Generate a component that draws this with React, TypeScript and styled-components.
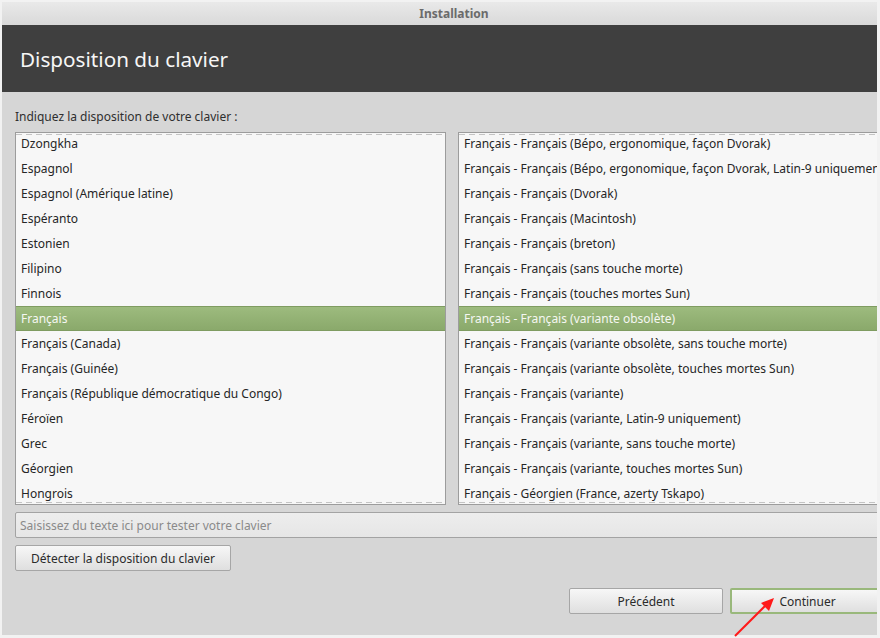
import React, { useState } from 'react';
import styled, { createGlobalStyle } from 'styled-components';

const GlobalStyle = createGlobalStyle`
  body {
    margin: 0;
    padding: 0;
    background: #f2f2f2;
    font-family: "Noto Sans", "Open Sans", sans-serif;
  }
`;

const Screen = styled.div`
  position: relative;
  width: 880px;
  height: 638px;
  overflow: hidden;
`;

// the visible part of the installer window; the window itself is wider
const Frame = styled.div`
  margin: 2px 0 0 2px;
  width: 875px;
  height: 633px;
  overflow: hidden;
`;

const Window = styled.div`
  width: 904px;
  height: 633px;
  display: flex;
  flex-direction: column;
  background: #d6d6d6;
`;

const TitleBar = styled.div`
  height: 23px;
  display: flex;
  align-items: center;
  justify-content: center;
  background: linear-gradient(#e9e9e9, #d9d9d9);
  color: #6b6b6b;
  font-size: 12px;
  font-weight: bold;
`;

const Header = styled.div`
  height: 67px;
  display: flex;
  align-items: center;
  padding: 0 18px;
  background: #3f3f3f;
  color: #f6f6f6;
  font-size: 20.7px;
`;

const Content = styled.div`
  flex: 1;
  display: flex;
  flex-direction: column;
  padding: 0 13px;
`;

const Prompt = styled.div`
  margin-top: 16px;
  height: 18px;
  line-height: 18px;
  font-size: 12px;
  color: #2f2f2f;
`;

const Lists = styled.div`
  margin-top: 6px;
  display: grid;
  grid-template-columns: 431px 431px;
  gap: 12px;
`;

const ListBox = styled.div`
  position: relative;
  height: 371px;
  border: 1px solid #9c9c9c;
  background: #f7f7f7;
  overflow: hidden;

  &::before,
  &::after {
    content: '';
    position: absolute;
    left: 0;
    right: 0;
    height: 1px;
    z-index: 1;
    background: repeating-linear-gradient(90deg, #c4c4c4 0 6px, transparent 6px 10px);
  }
  &::before { top: 1px; }
  &::after { bottom: 1px; }
`;

// rows are scrolled a couple of pixels past the top edge
const RowStack = styled.div`
  margin-top: -2px;
`;

const Row = styled.div<{ selected?: boolean }>`
  height: 25px;
  box-sizing: border-box;
  display: flex;
  align-items: center;
  padding-left: 5px;
  white-space: nowrap;
  font-size: 12px;
  color: ${p => (p.selected ? '#f5f7f2' : '#262626')};
  background: ${p => (p.selected ? 'linear-gradient(#9dbb7e, #8aa96b)' : 'transparent')};
  border-top: 1px solid ${p => (p.selected ? '#7f9c61' : 'transparent')};
  border-bottom: 1px solid ${p => (p.selected ? '#7f9c61' : 'transparent')};
`;

const TestInput = styled.input`
  margin-top: 7px;
  height: 26px;
  box-sizing: border-box;
  border: 1px solid #a3a3a3;
  border-radius: 2px;
  background: linear-gradient(#ededed, #e6e6e6);
  padding: 0 4px;
  font-family: inherit;
  font-size: 12px;
  color: #333;
  outline: none;

  &::placeholder {
    color: #8a8a8a;
  }
`;

const Button = styled.button<{ primary?: boolean; width: number }>`
  width: ${p => p.width}px;
  height: 26px;
  box-sizing: border-box;
  border: ${p => (p.primary ? '2px solid #99b87b' : '1px solid #a6a6a6')};
  border-radius: 2px;
  background: linear-gradient(#f7f7f7, #dfdfdf);
  font-family: inherit;
  font-size: 12px;
  color: #2b2b2b;
  padding: 0;
`;

const DetectRow = styled.div`
  margin-top: 7px;
  display: flex;
`;

const NavRow = styled.div`
  margin-top: 17px;
  display: flex;
  justify-content: flex-end;
  gap: 7px;
  padding-right: 8px;
`;

// red annotation arrow pointing at the Continuer button
const Annotation = styled.svg`
  position: absolute;
  left: 725px;
  top: 590px;
  pointer-events: none;
`;

const languages = [
  'Dzongkha',
  'Espagnol',
  'Espagnol (Amérique latine)',
  'Espéranto',
  'Estonien',
  'Filipino',
  'Finnois',
  'Français',
  'Français (Canada)',
  'Français (Guinée)',
  'Français (République démocratique du Congo)',
  'Féroïen',
  'Grec',
  'Géorgien',
  'Hongrois',
];

const variants = [
  'Français - Français (Bépo, ergonomique, façon Dvorak)',
  'Français - Français (Bépo, ergonomique, façon Dvorak, Latin-9 uniquement)',
  'Français - Français (Dvorak)',
  'Français - Français (Macintosh)',
  'Français - Français (breton)',
  'Français - Français (sans touche morte)',
  'Français - Français (touches mortes Sun)',
  'Français - Français (variante obsolète)',
  'Français - Français (variante obsolète, sans touche morte)',
  'Français - Français (variante obsolète, touches mortes Sun)',
  'Français - Français (variante)',
  'Français - Français (variante, Latin-9 uniquement)',
  'Français - Français (variante, sans touche morte)',
  'Français - Français (variante, touches mortes Sun)',
  'Français - Géorgien (France, azerty Tskapo)',
];

export default function App() {
  const [language, setLanguage] = useState('Français');
  const [variant, setVariant] = useState('Français - Français (variante obsolète)');

  return (
    <>
      <GlobalStyle />
      <Screen>
        <Frame>
          <Window>
            <TitleBar>Installation</TitleBar>
            <Header>Disposition du clavier</Header>
            <Content>
              <Prompt>Indiquez la disposition de votre clavier :</Prompt>
              <Lists>
                <ListBox>
                  <RowStack>
                    {languages.map(l => (
                      <Row key={l} selected={l === language} onClick={() => setLanguage(l)}>
                        {l}
                      </Row>
                    ))}
                  </RowStack>
                </ListBox>
                <ListBox>
                  <RowStack>
                    {variants.map(v => (
                      <Row key={v} selected={v === variant} onClick={() => setVariant(v)}>
                        {v}
                      </Row>
                    ))}
                  </RowStack>
                </ListBox>
              </Lists>
              <TestInput placeholder="Saisissez du texte ici pour tester votre clavier" />
              <DetectRow>
                <Button width={216}>Détecter la disposition du clavier</Button>
              </DetectRow>
              <NavRow>
                <Button width={154}>Précédent</Button>
                <Button width={155} primary>Continuer</Button>
              </NavRow>
            </Content>
          </Window>
        </Frame>
        <Annotation width="60" height="50" viewBox="0 0 60 50">
          <line x1="10" y1="46" x2="44" y2="12" stroke="#ff1a1a" strokeWidth="2" />
          <polygon points="49,8 36,13 44,21" fill="#ff1a1a" />
        </Annotation>
      </Screen>
    </>
  );
}
